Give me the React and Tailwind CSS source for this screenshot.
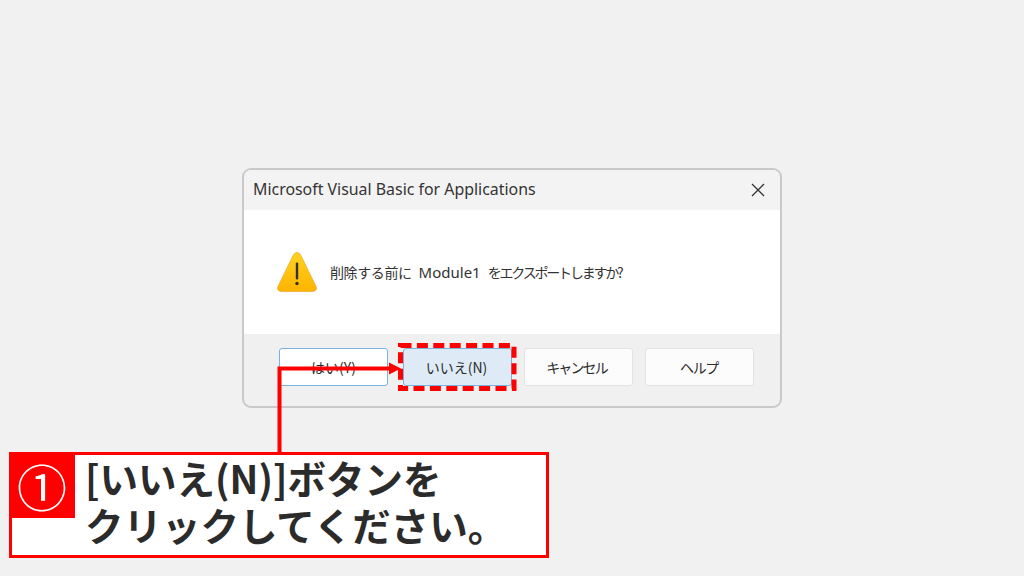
const jp = "font-['Noto_Sans_CJK_JP','Noto_Sans',sans-serif]";

function WarningIcon() {
  return (
    <svg width="40" height="40" viewBox="0 0 40 40" className="shrink-0">
      <defs>
        <linearGradient id="warn" x1="0" y1="0" x2="0" y2="1">
          <stop offset="0" stopColor="#ffd21f" />
          <stop offset="1" stopColor="#fdb400" />
        </linearGradient>
      </defs>
      <path
        d="M20 0.6 C21.6 0.6 22.8 1.6 23.8 3.4 L39 34.4 C40.2 37.2 38.8 39.4 35.8 39.4 L4.2 39.4 C1.2 39.4 -0.2 37.2 1 34.4 L16.2 3.4 C17.2 1.6 18.4 0.6 20 0.6 Z"
        fill="url(#warn)"
        stroke="#eda92b"
        strokeWidth="0.8"
      />
      <rect x="18.8" y="10.5" width="2.4" height="17" rx="1.1" fill="#33302a" />
      <circle cx="20" cy="31.5" r="1.7" fill="#33302a" />
    </svg>
  );
}

function DialogButton({ children, className }) {
  return (
    <button className={`flex h-[38px] w-[109px] items-center justify-center rounded-[3px] border text-[14px] text-[#2b2b2b] ${className}`}>
      {children}
    </button>
  );
}

export default function App() {
  return (
    <div className={`relative flex h-[576px] w-[1024px] flex-col overflow-hidden bg-[#f1f1f1] pl-[242px] pt-[168px] ${jp}`}>
      {/* Dialog */}
      <div className="flex h-[240px] w-[540px] flex-col overflow-hidden rounded-[9px] border-2 border-[#c9c9c9] bg-[#f0f0f0]">
        <div className="flex h-[40px] items-center justify-between bg-[#f3f3f3] pl-[9px] pr-[14px]">
          <span className="font-['Noto_Sans',sans-serif] text-[15.9px] text-[#333]">Microsoft Visual Basic for Applications</span>
          <svg width="14" height="14" viewBox="0 0 14 14" className="mr-[1px]">
            <path d="M1 1 L13 13 M13 1 L1 13" stroke="#333" strokeWidth="1.3" fill="none" />
          </svg>
        </div>
        <div className="flex h-[124px] items-center gap-[13px] bg-white pl-[33px]">
          <WarningIcon />
          <span className="whitespace-pre text-[14px] text-[#333]">
            <span className="tracking-[-0.4px]">削除する前に</span>
            <span className="ml-[7px] font-['Noto_Sans',sans-serif] text-[15px]">Module1</span>
            <span className="ml-[7px] tracking-[-2.2px]">をエクスポートしますか?</span>
          </span>
        </div>
        <div className="flex flex-1 pl-[35px] pt-[14px]">
          <DialogButton className="border-[#78b2df] bg-white">はい(Y)</DialogButton>
          <DialogButton className="ml-[15px] border-[#78b2df] bg-[#deebf7] pr-[2px]">いいえ(N)</DialogButton>
          <DialogButton className="ml-[12px] border-[#e3e3e3] bg-[#fcfcfc] pr-[4px] tracking-[-1.9px]">キャンセル</DialogButton>
          <DialogButton className="ml-[12px] border-[#e3e3e3] bg-[#fcfcfc] pr-[1px] tracking-[-1.4px]">ヘルプ</DialogButton>
        </div>
      </div>

      {/* Callout */}
      <div className="relative ml-[-233px] mt-[44px] h-[106px] w-[540px] border-[3px] border-[#ff0000] bg-white pl-[73px] text-[38.5px] font-bold leading-[47px] text-[#2b2b2b]">
        <div className="absolute left-[-3px] top-[-3px] flex h-[66px] w-[66px] items-center justify-center bg-[#ff0000] text-[50px] font-normal leading-none text-white">
          ①
        </div>
        <div className="mt-[-1px]">[いいえ(N)]ボタンを</div>
        <div>クリックしてください。</div>
      </div>

      {/* Red markers over the dialog */}
      <svg className="absolute left-0 top-0" width="1024" height="576" viewBox="0 0 1024 576">
        <rect x="400.5" y="345.5" width="113.5" height="43" stroke="#ff0000" strokeWidth="5" strokeDasharray="11 5.4" fill="none" />
        <path d="M279.5 453 V368.5 H392" stroke="#ff0000" strokeWidth="4" fill="none" />
        <path d="M389 362.5 L401 368.5 L389 374.5 Z" fill="#ff0000" />
      </svg>
    </div>
  );
}
